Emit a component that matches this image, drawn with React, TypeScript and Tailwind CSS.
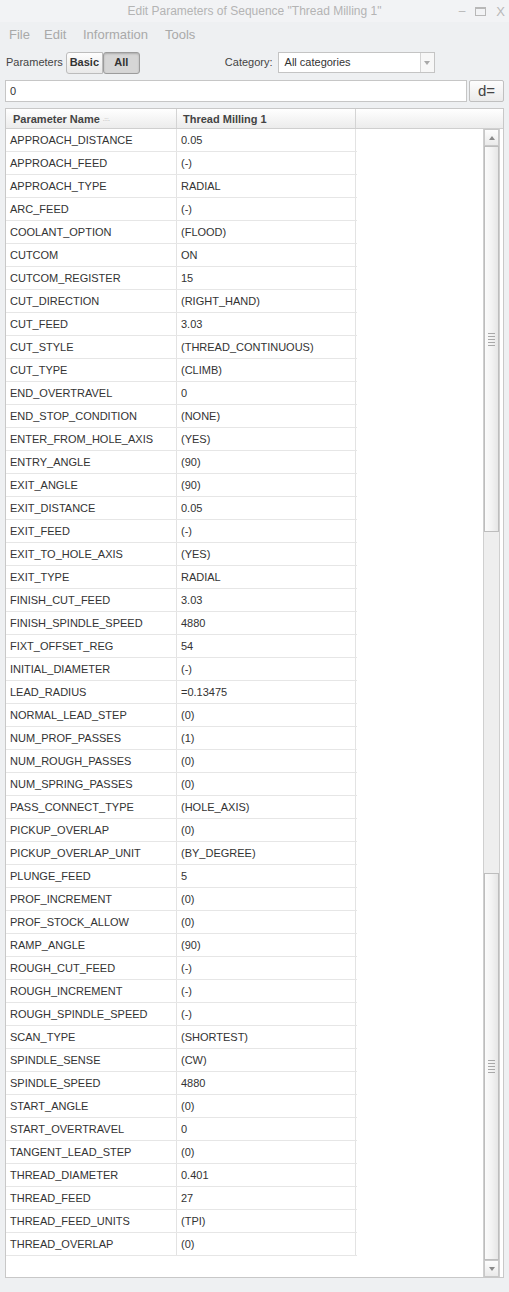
const rows: [string, string][] = [
  ["APPROACH_DISTANCE", "0.05"],
  ["APPROACH_FEED", "(-)"],
  ["APPROACH_TYPE", "RADIAL"],
  ["ARC_FEED", "(-)"],
  ["COOLANT_OPTION", "(FLOOD)"],
  ["CUTCOM", "ON"],
  ["CUTCOM_REGISTER", "15"],
  ["CUT_DIRECTION", "(RIGHT_HAND)"],
  ["CUT_FEED", "3.03"],
  ["CUT_STYLE", "(THREAD_CONTINUOUS)"],
  ["CUT_TYPE", "(CLIMB)"],
  ["END_OVERTRAVEL", "0"],
  ["END_STOP_CONDITION", "(NONE)"],
  ["ENTER_FROM_HOLE_AXIS", "(YES)"],
  ["ENTRY_ANGLE", "(90)"],
  ["EXIT_ANGLE", "(90)"],
  ["EXIT_DISTANCE", "0.05"],
  ["EXIT_FEED", "(-)"],
  ["EXIT_TO_HOLE_AXIS", "(YES)"],
  ["EXIT_TYPE", "RADIAL"],
  ["FINISH_CUT_FEED", "3.03"],
  ["FINISH_SPINDLE_SPEED", "4880"],
  ["FIXT_OFFSET_REG", "54"],
  ["INITIAL_DIAMETER", "(-)"],
  ["LEAD_RADIUS", "=0.13475"],
  ["NORMAL_LEAD_STEP", "(0)"],
  ["NUM_PROF_PASSES", "(1)"],
  ["NUM_ROUGH_PASSES", "(0)"],
  ["NUM_SPRING_PASSES", "(0)"],
  ["PASS_CONNECT_TYPE", "(HOLE_AXIS)"],
  ["PICKUP_OVERLAP", "(0)"],
  ["PICKUP_OVERLAP_UNIT", "(BY_DEGREE)"],
  ["PLUNGE_FEED", "5"],
  ["PROF_INCREMENT", "(0)"],
  ["PROF_STOCK_ALLOW", "(0)"],
  ["RAMP_ANGLE", "(90)"],
  ["ROUGH_CUT_FEED", "(-)"],
  ["ROUGH_INCREMENT", "(-)"],
  ["ROUGH_SPINDLE_SPEED", "(-)"],
  ["SCAN_TYPE", "(SHORTEST)"],
  ["SPINDLE_SENSE", "(CW)"],
  ["SPINDLE_SPEED", "4880"],
  ["START_ANGLE", "(0)"],
  ["START_OVERTRAVEL", "0"],
  ["TANGENT_LEAD_STEP", "(0)"],
  ["THREAD_DIAMETER", "0.401"],
  ["THREAD_FEED", "27"],
  ["THREAD_FEED_UNITS", "(TPI)"],
  ["THREAD_OVERLAP", "(0)"],
];

function Grip() {
  return (
    <div className="flex flex-col gap-[2px] w-[7px]">
      <div className="h-px bg-[#a8a8a8]" />
      <div className="h-px bg-[#a8a8a8]" />
      <div className="h-px bg-[#a8a8a8]" />
      <div className="h-px bg-[#a8a8a8]" />
      <div className="h-px bg-[#a8a8a8]" />
    </div>
  );
}

function Thumb({ h }: { h: string }) {
  return (
    <div
      className={`${h} border border-[#bdbdbd] bg-gradient-to-r from-[#fbfbfb] via-[#f3f3f3] to-[#e6e6e6] flex items-center justify-center`}
    >
      <Grip />
    </div>
  );
}

export default function App() {
  return (
    <div className="w-[509px] h-[1292px] bg-[#eef0f2] flex flex-col font-['Liberation_Sans',Arial,sans-serif] text-[#333] overflow-hidden">
      {/* title bar */}
      <div className="h-[22px] relative flex items-center justify-center bg-[#f2f3f5]">
        <span className="text-[12px] text-[#b4b4b4]">
          Edit Parameters of Sequence "Thread Milling 1"
        </span>
        <div className="absolute right-[4px] top-0 h-full flex items-center gap-[10px] text-[#b8b8b8]">
          <span className="text-[12px] leading-none">–</span>
          <span className="w-[11px] h-[9px] border border-[#b8b8b8] border-t-2" />
          <span className="text-[13px] leading-none">X</span>
        </div>
      </div>
      {/* menu */}
      <div className="h-[25px] flex items-center pl-[9px] text-[13px] text-[#a9a9a9]">
        <span className="w-[35px]">File</span>
        <span className="w-[39px]">Edit</span>
        <span className="w-[82px]">Information</span>
        <span>Tools</span>
      </div>
      {/* parameters row */}
      <div className="h-[31px] flex items-center pl-[6px]">
        <span className="text-[11px] text-[#444] mr-[3px]">Parameters</span>
        <div className="h-[22px] w-[37px] border border-[#bcbcbc] rounded-l-[3px] bg-gradient-to-b from-[#fdfdfd] to-[#e9e9e9] flex items-center justify-center text-[11px] font-bold text-[#333]">
          Basic
        </div>
        <div className="h-[22px] w-[37px] border border-[#9c9c9c] rounded-[3px] bg-[#d6d6d6] shadow-[inset_0_1px_2px_rgba(0,0,0,0.2)] flex items-center justify-center text-[11px] font-bold text-[#333]">
          All
        </div>
        <span className="ml-[85px] text-[11px] text-[#444] mr-[5px]">Category:</span>
        <div className="h-[21px] w-[157px] border border-[#c4c4c4] bg-white flex items-center">
          <span className="flex-1 pl-[6px] text-[11px] text-[#333]">All categories</span>
          <div className="w-[14px] h-full border-l border-[#d4d4d4] bg-[#f7f7f7] flex items-center justify-center">
            <div className="w-0 h-0 border-l-[3px] border-r-[3px] border-t-[4px] border-l-transparent border-r-transparent border-t-[#a8a8a8]" />
          </div>
        </div>
      </div>
      {/* input row */}
      <div className="h-[26px] flex items-center px-[5px] gap-[2px]">
        <div className="flex-1 h-[22px] border border-[#c6c6c6] bg-white flex items-center pl-[4px] text-[11px] text-[#333]">
          0
        </div>
        <div className="w-[35px] h-[22px] border border-[#c0c0c0] rounded-[2px] bg-gradient-to-b from-[#fdfdfd] to-[#ebebeb] flex items-center justify-center text-[15px] text-[#444]">
          d=
        </div>
      </div>
      {/* table */}
      <div className="mx-[5px] mt-[4px] mb-[14px] flex-1 border border-[#c8c8c8] bg-white flex flex-col">
        <div className="h-[20px] flex border-b border-[#cfcfcf] bg-gradient-to-b from-[#ffffff] to-[#ececec] text-[11px] font-bold text-[#444]">
          <div className="w-[171px] border-r border-[#d4d4d4] flex items-center pl-[7px] pt-[2px]">
            Parameter Name
            <span className="ml-[3px] text-[6px] text-[#999] font-normal tracking-tighter">.:::.</span>
          </div>
          <div className="w-[179px] border-r border-[#d4d4d4] flex items-center pl-[6px] pt-[2px]">
            Thread Milling 1
          </div>
          <div className="flex-1" />
        </div>
        <div className="flex-1 flex">
          <div className="flex-1">
            <div className="w-[351px]">
              {rows.map(([name, value]) => (
                <div
                  key={name}
                  className="h-[23px] flex border-b border-[#e6e6e6] text-[11px] text-[#333]"
                >
                  <div className="w-[171px] border-r border-[#e3e3e3] flex items-center pl-[4px]">
                    {name}
                  </div>
                  <div className="w-[179px] border-r border-[#e3e3e3] flex items-center pl-[4px]">
                    {value}
                  </div>
                </div>
              ))}
            </div>
          </div>
          <div className="w-[17px] mr-[3px] flex flex-col border-l border-[#cfcfcf] border-r bg-[#eeeeee]">
            <div className="h-[17px] border border-[#c8c8c8] bg-gradient-to-b from-[#fdfdfd] to-[#eaeaea] flex items-center justify-center">
              <div className="w-0 h-0 border-l-[3px] border-r-[3px] border-b-[4px] border-l-transparent border-r-transparent border-b-[#8a8a8a]" />
            </div>
            <Thumb h="h-[386px]" />
            <div className="flex-1" />
            <Thumb h="h-[387px]" />
            <div className="h-[17px] border border-[#c8c8c8] bg-gradient-to-b from-[#fdfdfd] to-[#eaeaea] flex items-center justify-center">
              <div className="w-0 h-0 border-l-[3px] border-r-[3px] border-t-[4px] border-l-transparent border-r-transparent border-t-[#8a8a8a]" />
            </div>
          </div>
        </div>
      </div>
    </div>
  );
}
